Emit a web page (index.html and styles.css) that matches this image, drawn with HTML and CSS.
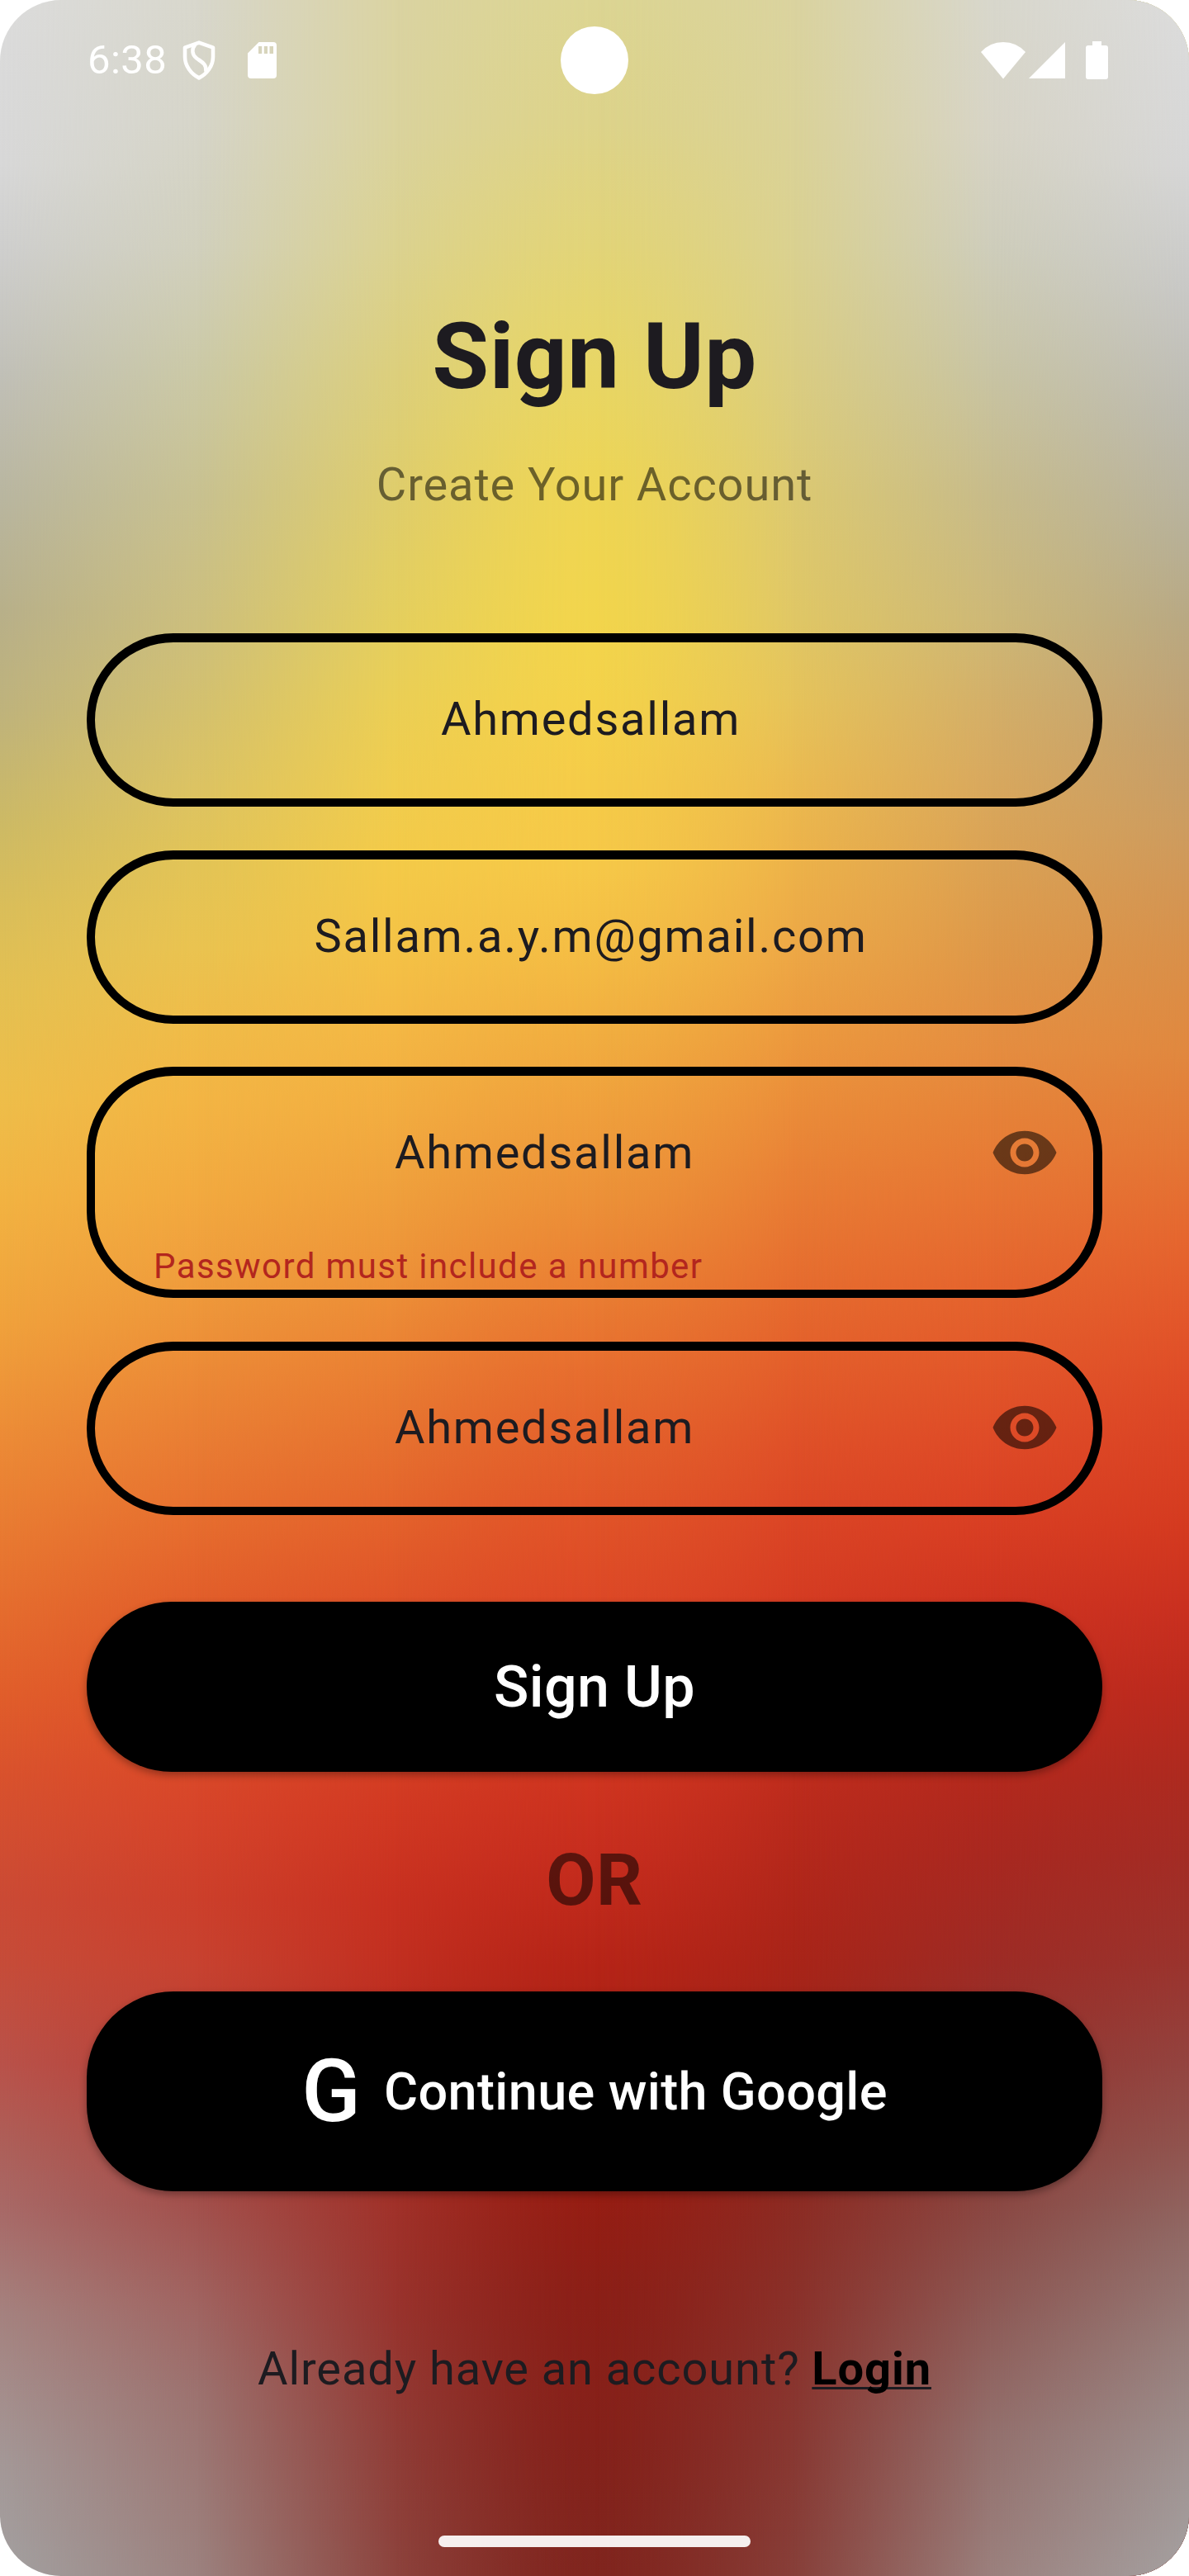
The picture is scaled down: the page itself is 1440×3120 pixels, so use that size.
FILE: index.html
```html
<!DOCTYPE html>
<html lang="en">
<head>
<meta charset="utf-8">
<title>Sign Up</title>
<link rel="stylesheet" href="styles.css">
</head>
<body>
<div class="screen">
  <div class="backdrop" aria-hidden="true">
    <div class="band band-1"></div>
    <div class="band band-2"></div>
    <div class="band band-3"></div>
    <div class="band band-4"></div>
    <div class="band band-5"></div>
    <div class="band band-6"></div>
    <div class="band band-7"></div>
  </div>

  <header class="status">
    <div class="status-side">
      <span class="clock">6:38</span>
      <svg class="shield" width="40" height="48" viewBox="0 0 40 48" fill="none" stroke="#fff" stroke-width="4.6" stroke-linejoin="round">
        <path d="M20 2.6 37 8.6V20C37 31 29.5 40.500 20 45.400C10.500 40.500 3 31 3 20V8.600Z"/>
        <path d="M15.500 4.500C10.500 11 12 17.500 17 21.500C23 26 29.500 28 28.500 38"/>
      </svg>
      <svg class="sd" width="35" height="44" viewBox="0 0 35 44"><path fill="#fff" fill-rule="evenodd" d="M13.500 0H31Q35 0 35 4V40Q35 44 31 44H4Q0 44 0 40V13.500ZM13 5V14H17.200V5ZM19.800 5V14H24V5ZM26.500 5V14H31V5Z"/></svg>
    </div>
    <div class="camera"></div>
    <div class="status-side status-right">
      <svg class="wifi" width="54" height="45" viewBox="0 0 54 45"><path fill="#fff" d="M0 12Q11 0 27 0T54 12L27 44.500Z"/></svg>
      <svg class="signal" width="44" height="44" viewBox="0 0 44 44"><path fill="#fff" d="M44 0V44H0Z"/></svg>
      <svg class="battery" width="27" height="46" viewBox="0 0 27 46"><path fill="#fff" d="M8 0H19V5H24Q27 5 27 8V43Q27 46 24 46H3Q0 46 0 43V8Q0 5 3 5H8Z"/></svg>
    </div>
  </header>

  <main class="content">
    <h1 class="title">Sign Up</h1>
    <p class="subtitle">Create Your Account</p>

    <form class="form">
      <div class="field"><div class="value">Ahmedsallam</div></div>
      <div class="field"><div class="value">Sallam.a.y.m@gmail.com</div></div>
      <div class="field field-error">
        <div class="row">
          <div class="value">Ahmedsallam</div>
          <svg class="eye" width="84" height="84" viewBox="0 0 24 24"><path d="M12 4.500C7 4.500 2.730 7.610 1 12c1.730 4.390 6 7.500 11 7.500s9.270-3.110 11-7.500c-1.730-4.390-6-7.500-11-7.500zM12 17c-2.760 0-5-2.240-5-5s2.240-5 5-5 5 2.240 5 5-2.240 5-5 5zm0-8c-1.660 0-3 1.340-3 3s1.340 3 3 3 3-1.340 3-3-1.340-3-3-3z"/></svg>
        </div>
        <div class="error">Password must include a number</div>
      </div>
      <div class="field">
        <div class="row">
          <div class="value">Ahmedsallam</div>
          <svg class="eye" width="84" height="84" viewBox="0 0 24 24"><path d="M12 4.500C7 4.500 2.730 7.610 1 12c1.730 4.390 6 7.500 11 7.500s9.270-3.110 11-7.500c-1.730-4.390-6-7.500-11-7.500zM12 17c-2.760 0-5-2.240-5-5s2.240-5 5-5 5 2.240 5 5-2.240 5-5 5zm0-8c-1.660 0-3 1.340-3 3s1.340 3 3 3 3-1.340 3-3-1.340-3-3-3z"/></svg>
        </div>
      </div>
      <button class="button submit" type="button">Sign Up</button>
      <div class="or">OR</div>
      <button class="button google" type="button"><span class="g">G</span><span>Continue with Google</span></button>
    </form>

    <p class="login">Already have an account? <a class="link">Login</a></p>
  </main>
  <div class="home-bar"></div>
</div>
</body>
</html>
```

FILE: styles.css
```css
* { box-sizing: border-box; }

body {
  margin: 0;
  background: #fff;
  font-family: Roboto, sans-serif;
  color: #1d1b20;
}

.screen {
  position: relative;
  width: 1440px;
  height: 3120px;
  border-radius: 74px;
  overflow: hidden;
  display: flex;
  flex-direction: column;
  align-items: center;
}

/* Colour mesh: vertical gradients cross-faded from left to right.
   The two fades around the centre are eased so no ridge shows there. */
.backdrop, .band { position: absolute; inset: 0; }
.backdrop { z-index: -1; }

.band-1 {
  background: linear-gradient(#dcdcdc 0, #d8d8d8 200px, #cfcfce 300px, #c1c0b8 450px, #b9b6a0 600px, #b8b08a 740px, #bfb37c 860px, #cdba65 1000px, #dabe5a 1100px, #e4c052 1200px, #eebe4a 1330px, #f2b342 1450px, #f0a23c 1600px, #ec8a36 1750px, #e77430 1900px, #e15e2b 2050px, #d9522d 2150px, #cb4a35 2300px, #c64c39 2380px, #b9524a 2500px, #ad605a 2600px, #a86a68 2680px, #a5827f 2800px, #a49897 2980px, #a3a1a1 3120px);
}
.band-2 {
  background: linear-gradient(#d8d7cc 0, #d6d5c9 150px, #d1d0bd 300px, #cbc9a6 450px, #c8c190 600px, #cdbf7c 760px, #d4c16e 860px, #dcc363 950px, #e3c456 1050px, #eac350 1150px, #f0bb48 1250px, #f3b544 1330px, #f2a93f 1450px, #ef9c3c 1550px, #ec8c37 1650px, #e97c33 1750px, #e66c2e 1850px, #e15c2a 1950px, #dc4c28 2100px, #d6442a 2200px, #cc3f2b 2300px, #c74230 2380px, #b63f36 2500px, #a2504c 2670px, #a0625f 2780px, #9c726f 2900px, #9c827f 3120px);
  mask-image: linear-gradient(90deg, transparent 0, #000 240px);
}
.band-3 {
  background: linear-gradient(#dad3a2 0, #dad39d 160px, #dbd290 300px, #dccf7c 450px, #dfcd6b 600px, #e5cf5d 760px, #ebcf55 850px, #f0cd4e 950px, #f4ca48 1050px, #f4c246 1150px, #f4b744 1250px, #f2ac40 1350px, #ef9f3c 1450px, #ed9138 1550px, #ea8033 1650px, #e6702f 1750px, #e3602b 1850px, #de5128 1950px, #d84225 2100px, #d03822 2200px, #c73020 2300px, #c12f20 2380px, #b32c22 2500px, #a03129 2670px, #98332d 2800px, #903c36 2950px, #8c433d 3120px);
  mask-image: linear-gradient(90deg, transparent 240px, #000 480px);
}
.band-4 {
  background: linear-gradient(#dcd593 0, #ddd38a 150px, #e2d478 300px, #e8d665 450px, #eed554 600px, #f2d54c 750px, #f4d24a 850px, #f5cb48 950px, #f6c848 1050px, #f4bd44 1150px, #f1ae40 1250px, #ef9f3c 1350px, #ec9138 1450px, #ea8033 1550px, #e76f2f 1650px, #e3602b 1750px, #e05228 1850px, #dc4726 1950px, #cf3520 2150px, #c62d1e 2250px, #b52417 2380px, #a82217 2500px, #961d13 2660px, #8b1f17 2780px, #85211a 2950px, #80251e 3120px);
  mask-image: linear-gradient(90deg, transparent 480px, rgba(0, 0, 0, 0.18) 510px, rgba(0, 0, 0, 0.37) 545px, rgba(0, 0, 0, 0.54) 580px, rgba(0, 0, 0, 0.7) 615px, rgba(0, 0, 0, 0.84) 650px, rgba(0, 0, 0, 0.94) 685px, #000 720px);
}
.band-5 {
  background: linear-gradient(#dad39f 0, #dad298 160px, #dad190 300px, #dacd82 450px, #dcc971 600px, #e0c765 750px, #e6c35a 850px, #ebba50 950px, #edb249 1050px, #eda846 1150px, #ec9a3e 1250px, #ea8b39 1350px, #e87c34 1450px, #e66d2f 1550px, #e35f2b 1650px, #df5028 1750px, #da4425 1850px, #d43b22 1950px, #c42f1e 2100px, #b92a1c 2200px, #af261a 2300px, #a82418 2380px, #9c251c 2500px, #8c2b23 2670px, #8a3029 2780px, #883731 2950px, #873f39 3120px);
  mask-image: linear-gradient(90deg, transparent 720px, rgba(0, 0, 0, 0.06) 755px, rgba(0, 0, 0, 0.16) 790px, rgba(0, 0, 0, 0.3) 825px, rgba(0, 0, 0, 0.46) 860px, rgba(0, 0, 0, 0.63) 895px, rgba(0, 0, 0, 0.82) 930px, #000 960px);
}
.band-6 {
  background: linear-gradient(#d8d7cc 0, #d7d4c6 160px, #cecdbb 300px, #c8c4a4 450px, #c7bb8a 600px, #cdb877 750px, #d3af69 850px, #d8a85e 950px, #dba153 1050px, #de9849 1150px, #e58d40 1270px, #e68238 1350px, #e77433 1450px, #e5652e 1550px, #e2582a 1650px, #de4a27 1750px, #d83e23 1850px, #cd3320 1950px, #c12c1e 2050px, #b3291d 2150px, #a82820 2250px, #9d2b25 2380px, #91342e 2500px, #8a4742 2670px, #8d5a56 2800px, #93706d 2950px, #9b807d 3120px);
  mask-image: linear-gradient(90deg, transparent 960px, #000 1200px);
}
.band-7 {
  background: linear-gradient(#dcdcdc 0, #d6d6d6 200px, #c8c8c6 350px, #bcbab0 500px, #b7b097 650px, #b8a883 750px, #c39f6c 900px, #cc9c60 1000px, #d8904a 1150px, #e0883f 1270px, #e47635 1400px, #e5662f 1500px, #e2562a 1600px, #dd4826 1700px, #d43a20 1850px, #c93020 1950px, #bb2a1e 2050px, #ad2a20 2150px, #a32c25 2250px, #9a342e 2380px, #934440 2500px, #90544f 2600px, #906864 2700px, #98807d 2850px, #a09594 3000px, #a5a1a1 3120px);
  mask-image: linear-gradient(90deg, transparent 1200px, #000 1440px);
}

.status {
  width: 1440px;
  height: 146px;
  padding: 0 98px 0 106px;
  display: flex;
  align-items: center;
  justify-content: space-between;
}
.status-side { display: flex; align-items: center; width: 573px; }
.clock { width: 115px; font-size: 49px; line-height: 58px; letter-spacing: 0.4px; color: #fff; }
.sd { margin-left: 39px; }
.status-right { justify-content: flex-end; width: 581px; }
.signal { margin-left: 4px; }
.battery { margin-left: 25px; }
.camera { width: 82px; height: 82px; border-radius: 50%; background: #fff; }

.content {
  width: 1230px;
  display: flex;
  flex-direction: column;
  padding-top: 221px;
}
.title {
  margin: 0;
  font-size: 112px;
  line-height: 130px;
  font-weight: 700;
  letter-spacing: 0.5px;
  text-align: center;
}
.subtitle {
  margin: 50px 0 0;
  font-size: 56px;
  line-height: 80px;
  letter-spacing: 0.875px;
  text-align: center;
  color: rgba(0, 0, 0, 0.54);
}
.form { display: flex; flex-direction: column; margin-top: 140px; }
.field {
  height: 210px;
  margin-bottom: 52.5px;
  border: solid #000;
  border-width: 11px 11px 10px 10px;
  border-radius: 105px;
}
.field-error { height: 280px; }
.value {
  flex: 1;
  padding-right: 8px;
  font-size: 56px;
  line-height: 186px;
  letter-spacing: 1.75px;
  text-align: center;
}
.row { display: flex; align-items: center; padding-right: 41px; }
.row .value { padding: 0 0 0 5px; }
.eye { fill: rgba(0, 0, 0, 0.54); }
.error {
  margin-top: 20px;
  padding-left: 71px;
  font-size: 42px;
  line-height: 50px;
  letter-spacing: 1.4px;
  color: #b3261e;
}
.button {
  border: 0;
  padding: 0;
  background: #000;
  color: #fff;
  border-radius: 105px;
  font-family: inherit;
  font-weight: 500;
  letter-spacing: 0.35px;
  box-shadow: 0 4px 10px rgba(0, 0, 0, 0.32);
  display: flex;
  align-items: center;
  justify-content: center;
}
.submit { height: 206px; margin-top: 53px; font-size: 70px; line-height: 82px; }
.or {
  margin-top: 80px;
  font-size: 87.5px;
  line-height: 102px;
  font-weight: 700;
  letter-spacing: 0.5px;
  text-align: center;
  color: rgba(0, 0, 0, 0.54);
}
.google { height: 242px; margin-top: 84px; font-size: 63px; gap: 28px; }
.g { font-size: 105px; }
.login {
  margin: 175px 0 0;
  font-size: 56px;
  line-height: 80px;
  letter-spacing: 0.9px;
  text-align: center;
}
.link {
  font-weight: 700;
  color: #000;
  text-decoration: underline #1d1b20 3px;
  text-underline-offset: 3px;
  text-decoration-skip-ink: none;
}
.home-bar {
  width: 378px;
  height: 14px;
  margin: auto 0 35px;
  border-radius: 7px;
  background: rgba(255, 255, 255, 0.92);
}
```
